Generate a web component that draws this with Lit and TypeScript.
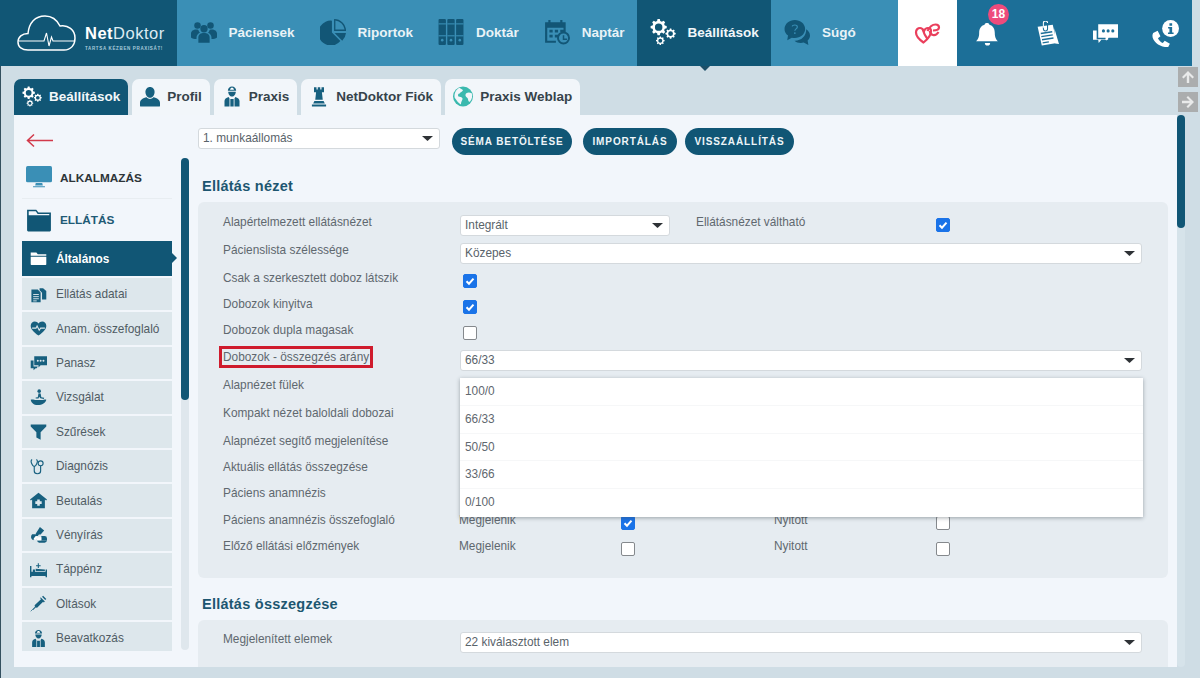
import { LitElement, html, css, svg } from "lit";
import { customElement } from "lit/decorators.js";

// gear outline with a round hole, to be filled with evenodd
function gear(cx: number, cy: number, r: number, teeth = 8) {
  const pts: string[] = [];
  const step = (Math.PI * 2) / teeth;
  for (let i = 0; i < teeth; i++) {
    const a = i * step;
    const corners: [number, number][] = [
      [a - step * 0.32, r * 0.78],
      [a - step * 0.18, r],
      [a + step * 0.18, r],
      [a + step * 0.32, r * 0.78],
    ];
    for (const [t, d] of corners) {
      pts.push(`${(cx + Math.cos(t) * d).toFixed(2)} ${(cy + Math.sin(t) * d).toFixed(2)}`);
    }
  }
  const h = r * 0.46;
  return `M${pts.join("L")}Z M${cx - h} ${cy}a${h} ${h} 0 1 0 ${h * 2} 0a${h} ${h} 0 1 0 ${-h * 2} 0Z`;
}

const gears = `${gear(8, 7.5, 7.5)} ${gear(19, 13.5, 4.8)} ${gear(9.5, 20, 4)}`;

const ICONS: Record<string, unknown> = {
  users: svg`<circle cx="12" cy="9" r="3.400"/><circle cx="6" cy="6" r="3"/><circle cx="18" cy="6" r="3"/>
    <path d="M6.800 22v-5c0-2.700 2.300-4 5.200-4s5.200 1.300 5.200 4v5z"/><path d="M0 17v-3.500c0-2.300 2.200-3.800 4.800-3.800.8 0 1.500.1 2 .4.2 1 .8 1.900 1.500 2.500-2 .8-3.200 2.400-3.200 4.400v1.500C3 18.500 1.200 18 0 17zM24 17v-3.500c0-2.300-2.200-3.800-4.800-3.800-.8 0-1.500.1-2 .4-.2 1-.8 1.900-1.500 2.500 2 .8 3.200 2.400 3.200 4.400v1.500c2.100 0 3.900-.5 5.100-1.500z"/>`,
  pie: svg`<path d="M11 1.500v11l7.800 7.800A11.500 11.500 0 1 1 11 1.500z"/><path fill-rule="evenodd" d="M13 0a11 11 0 0 1 11 11H13zm1.200 1.300v8.500h8.500a9.600 9.600 0 0 0-8.500-8.500z"/><path d="M13.500 13H24a11 11 0 0 1-3.500 7z"/>`,
  binders: svg`<g><rect x="0.500" y="0" width="6.800" height="24" rx="1"/><rect x="8.600" y="0" width="6.800" height="24" rx="1"/><rect x="16.700" y="0" width="6.800" height="24" rx="1"/></g>
    <g fill="#3a8fb6"><rect x="0.500" y="4" width="6.800" height="1"/><rect x="8.600" y="4" width="6.800" height="1"/><rect x="16.700" y="4" width="6.800" height="1"/><rect x="0.500" y="15" width="6.800" height="1"/><rect x="8.600" y="15" width="6.800" height="1"/><rect x="16.700" y="15" width="6.800" height="1"/><circle cx="3.900" cy="19.500" r="1.200"/><circle cx="12" cy="19.500" r="1.200"/><circle cx="20.100" cy="19.500" r="1.200"/></g>`,
  calendar: svg`<path fill-rule="evenodd" d="M1 3h3V1h2v2h9V1h2v2h3v9h-2V8H3v12h8v2H1zM5 10h3v2.500H5zM10 10h3v2.500h-3zM15 10h3v2H15zM5 14.500h3V17H5zM10 14.500h3V17h-3z"/>
    <path fill-rule="evenodd" d="M18 11.500a6 6 0 1 1 0 12 6 6 0 0 1 0-12zm0 1.800a4.200 4.200 0 1 0 0 8.400 4.200 4.200 0 0 0 0-8.400zM17.300 15h1.400v3h2.500v1.300h-3.900z"/>`,
  gears: svg`<path fill-rule="evenodd" d="${gears}"/>`,
  help: svg`<path d="M10 1c5 0 9.500 3.500 9.500 8.300s-4.500 8.300-9.500 8.300c-1 0-2-.1-2.800-.4L3 19.500l.7-4.200C1.500 13.800.5 11.700.5 9.300.500 4.500 5 1 10 1z"/><path d="M20.500 9.500c2 1.300 3.500 3.300 3.500 5.700 0 1.800-.8 3.400-2.200 4.600l.7 4.200-4.300-2.300c-1 .3-1.800.4-2.700.4-2.300 0-4.400-.8-5.800-2.100 5.700.3 11-3.700 10.800-10.500z"/>
    <path d="M7.500 6.800c.4-1.500 4.800-2 4.800.5 0 1.800-2.300 1.800-2.300 3.600" fill="none" stroke="#3a8fb6" stroke-width="1.100"/><circle cx="10" cy="13" r=".8" fill="#3a8fb6"/>`,
  bell: svg`<path d="M12 1.500c1 0 1.700.7 1.800 1.700 3.600.9 5.200 4 5.200 7.800 0 4.500 1.500 6.500 3 8H1c1.500-1.500 3-3.500 3-8 0-3.800 1.600-6.900 5.200-7.800.1-1 .8-1.700 1.800-1.700z" transform="translate(0 .5)"/><path d="M9.500 21h5a2.500 2.500 0 0 1-5 0z"/>`,
  clip: svg`<path d="M3.500 5.500l14.500-2 4 17.500L7.500 23.500z"/><path d="M19.500 7l4.500 15-3.500-.5z"/>
    <path d="M9 7.500V3c0-2.800 4-2.800 4 0v4.500a2 2 0 0 1-4 0" fill="none" stroke="#1c6f98" stroke-width="1"/>
    <path d="M9 7.500V3c0-2.800 4-2.800 4 0" fill="none" stroke="#fff" stroke-width="1" transform="translate(0 -1)"/>
    <g stroke="#1c6f98" stroke-width="1.300"><path d="M6.500 12l11-1.700M7 15l11-1.700M7.700 18l11-1.700M8.300 21l6-1"/></g>`,
  chat: svg`<path d="M5 3h19v13H15l-2.500 3-.5-3H5z"/><path d="M0 9h3.500v8.500h8l3-2v2.500H8l-2.500 3-.5-3H0z"/>
    <g fill="#1c6f98"><circle cx="10" cy="9.500" r="1.500"/><circle cx="14.500" cy="9.500" r="1.500"/><circle cx="19" cy="9.500" r="1.500"/></g>`,
  phone: svg`<path fill-rule="evenodd" d="M1 11.500L5 9.500l2.500 5-2.200 1.700c.9 2 2.200 3.300 4.300 4.300l1.700-2 4.600 2.700-1.500 2.800C6.500 25 -2 17.500 1 11.500z"/><circle cx="16.500" cy="7.500" r="7.500"/>
    <path fill="#1c6f98" d="M15.500 2.800h2.400v2.200h-2.400zM14.300 6.200h3.600v5h1.300v1.300h-5v-1.300h1.300V7.500h-1.200z"/>`,
  person: svg`<path d="M12 .500c3.300 0 5.500 2.600 5.500 6s-2.200 7-5.500 7-5.500-3.600-5.500-7 2.200-6 5.500-6z"/><path d="M8 13c1 1.300 2.500 2 4 2s3-.7 4-2c4.500 1 8 3 8 6.500V23a1 1 0 0 1-1 1H1a1 1 0 0 1-1-1v-3.500C0 16 3.500 14 8 13z"/>`,
  doctor: svg`<path d="M7 5c0-3 2.300-5 5-5s5 2 5 5H7z"/><path d="M7.500 6.200h9c0 3-2 5.800-4.500 5.800S7.500 9.200 7.500 6.200z"/><path d="M3 24v-6.500c0-2.500 2-4 5-5l1 2V24zm18 0v-6.500c0-2.500-2-4-5-5l-1 2V24zM10 15h4v9h-4z"/><path d="M10.800 1.500h2.400v1h1v1.500h-4.400V2.500h1z" fill="#fff"/>`,
  rook: svg`<path d="M6 1h3v2.500h1.500V1h3v2.500H15V1h3v6h-2.500l1 9h-9l1-9H6zM6.500 17.500h11l1.500 3H5zM3.500 21.500h17V24h-17z"/>`,
  globe: svg`<circle cx="12" cy="12" r="12" fill="#3ab9ae"/><path fill="#f2f6fa" d="M8 1.500c1 1.500 3 1.500 4 3-1 2-3 2-4 4-2 0-2.500 2-1.500 3.500 2 .5 4 .5 5 2.500 0 2-2 4-2 7-3-1-5-5-7.500-8C1 8 4 3 8 1.500zM16 8c2-1.500 4.500-1 6.500 0 1 3 .5 7-2 10-1.500 1-2.500-1-2.500-3 0-1.500-2.500-2-3-4 0-1 0-2.500 1-3z"/>`,
  monitor: svg`<rect x="0" y="1" width="24" height="15" rx="1.500"/><path d="M9 16.500h6l.5 2.500h-7zM6.500 19.500h11v1h-11z"/>`,
  folder: svg`<path fill-rule="evenodd" d="M1 2.500h8.500l2 2.500H23v16.500a1 1 0 0 1-1 1H2a1 1 0 0 1-1-1zM2.500 4v3.500h19V6.500H10.800L9 4z"/>`,
  folderw: svg`<path d="M1 3.500h8l2 2.500h12v2H1zM1 9.500h22v10.500a1 1 0 0 1-1 1H2a1 1 0 0 1-1-1z"/>`,
  docs: svg`<path d="M2 5h9l4 4v14H2zM17 9.500l-3.500-3.500V3h5l4.500 4v12h-6z"/><g stroke="#dde7ec" stroke-width="1.300"><path d="M4.500 12h8M4.500 15h8M4.500 18h8M4.500 21h5"/></g>`,
  heart: svg`<path d="M12 22C4 16 1 12.500 1 8c0-3.500 2.600-6 5.800-6C9 2 11 3.200 12 5c1-1.800 3-3 5.200-3C20.400 2 23 4.500 23 8c0 4.500-3 8-11 14z"/><path d="M3 11.500h5.500l1.500-3 3 6 2-3h6" fill="none" stroke="#dde7ec" stroke-width="1.500"/>`,
  panasz: svg`<path d="M6 3h18v13H15l-3 3v-3H6z"/><path d="M1 9h4v8.500h6L9.500 20H8l-3 3v-3H1z"/><g fill="#dde7ec"><circle cx="11" cy="9.500" r="1.400"/><circle cx="15" cy="9.500" r="1.400"/><circle cx="19" cy="9.500" r="1.400"/></g>`,
  exam: svg`<circle cx="13" cy="3" r="2.500"/><path d="M12 6l3 .5 1 5 4 1-.5 1.500-5-1-1.500-2-1 2.500H8v-1.500l3-.5zM1 15c3-1 5 .5 8 .5h7c3 0 6-1.500 7-.5-.5 4-6 7.500-12 7.500S2 19.500 1 15z"/>`,
  funnel: svg`<path d="M1 2h22v3L15 13v10.500l-6-3V13L1 5z"/>`,
  steth: svg`<g fill="none" stroke="currentColor" stroke-width="1.600"><path d="M3 2C1.500 3 1.500 6 2.500 8c.8 2 2 3.500 3.500 4 1.500-.5 2.700-2 3.500-4 1-2 1-5-.5-6"/><path d="M6 12v6.500c0 5 9 5 9 0V11"/><circle cx="15" cy="7.500" r="3.500"/></g>`,
  house: svg`<path fill-rule="evenodd" d="M12 1l12 9.500-1.200 1.500L21 10.600V23H3V10.600L1.200 12 0 10.500zm-1.800 9.500v2.700H7.500v3.600h2.700v2.700h3.600v-2.700h2.700v-3.600h-2.700v-2.700z"/>`,
  pills: svg`<path d="M14 1.500l6 5-5 5.500H9l-1-1zM7.500 11.800l5 .2-3.500 5H6.500l-2 3c-3.500-2-4-6-1.500-8.500z" fill-rule="evenodd"/><path d="M5 18l3-4 4 .5-4 5z" fill="#fff"/><path d="M16 14h4.500a3.500 3.500 0 0 1 3.500 3.500v3H16z"/><path d="M10 20.500h14a3.500 3.500 0 0 1-3.500 3H13a3.500 3.500 0 0 1-3-3z"/><path d="M11 16h5v4h-6c0-2 0-3 1-4z" fill="#fff"/>`,
  bed: svg`<path d="M0 7h2v8h20v-3h2v11h-2v-2H2v2H0zM4 12h3v3H4zM8 11l13 1v2H8z"/><path d="M11 3h1.500v3H15v1.500h-2.500V10H11V7.500H8.500V6H11z"/>`,
  syringe: svg`<path d="M15 3l6 6-1.500 1.500-1-1-8.500 8.500-2-.5-3.500 3.500-1-1 3.500-3.500-.5-2L15.500 6l-1-1.500zM18.500 1l4.500 4.500L21.500 7 17 2.500z"/><path d="M1 23l3-3" stroke="currentColor" stroke-width="1"/>`,
  arrow: svg`<path d="M27 7H1.500M8 1L1.500 7 8 13" fill="none" stroke="#d2394a" stroke-width="1.500"/>`,
  caret: svg`<path d="M0 0h10L5 5z"/>`,
};

function icon(name: string, cls = "") {
  return html`<svg class="ic ${cls}" viewBox="0 0 24 24" fill="currentColor">${ICONS[name]}</svg>`;
}

const NAV = [
  ["users", "Páciensek"],
  ["pie", "Riportok"],
  ["binders", "Doktár"],
  ["calendar", "Naptár"],
  ["gears", "Beállítások"],
  ["help", "Súgó"],
];

const TABS = [
  ["gears", "Beállítások"],
  ["person", "Profil"],
  ["doctor", "Praxis"],
  ["rook", "NetDoktor Fiók"],
  ["globe", "Praxis Weblap"],
];

const SIDE = [
  ["docs", "Ellátás adatai"],
  ["heart", "Anam. összefoglaló"],
  ["panasz", "Panasz"],
  ["exam", "Vizsgálat"],
  ["funnel", "Szűrések"],
  ["steth", "Diagnózis"],
  ["house", "Beutalás"],
  ["pills", "Vényírás"],
  ["bed", "Táppénz"],
  ["syringe", "Oltások"],
  ["doctor", "Beavatkozás"],
];

const OPTIONS = ["100/0", "66/33", "50/50", "33/66", "0/100"];

@customElement("app-root")
export class AppRoot extends LitElement {
  static styles = css`
    :host {
      display: block;
      width: 1200px;
      height: 678px;
      overflow: hidden;
      background: #cfdde5;
      font-family: "Liberation Sans", Arial, sans-serif;
      color: #5f686f;
      font-size: 11.85px;
    }
    .ic { display: block; flex: none; }

    .top { display: flex; height: 66px; width: 1192px; background: #3a8fb6; }
    .logo { width: 177px; background: #115675; display: flex; align-items: center; padding-left: 17px; box-sizing: border-box; color: #fff; gap: 8px; flex: none; }
    .logo svg { flex: none; }
    .brand { font-size: 16.5px; letter-spacing: 0.5px; line-height: 18px; padding-top: 9px; }
    .brand b { font-weight: 700; }
    .brand span { font-weight: 400; color: #dcebf2; }
    .brand small { display: block; font-size: 4.5px; line-height: 7px; margin-top: 3px; letter-spacing: 0.65px; font-weight: 700; color: #a9cbdb; white-space: nowrap; }
    .nav { display: flex; flex: 1; padding-left: 1px; }
    .nav a { display: flex; align-items: center; gap: 12px; padding: 0 12.5px 2px; color: #e9f3f7; font-size: 13.5px; font-weight: 700; position: relative; }
    .nav a .ic { width: 26px; height: 26px; color: #125676; }
    .nav a.on { background: #115675; color: #f0f6f9; }
    .nav a.on .ic { color: #fff; }
    .nav a.on::after { content: ""; position: absolute; left: 63px; top: 66px; border: 5px solid transparent; border-top-color: #1c4f68; border-bottom: 0; }
    .heartbox { width: 59px; background: #fff; display: flex; align-items: center; justify-content: center; flex: none; }
    .tools { width: 235px; background: #1c6f98; display: flex; align-items: center; color: #fff; flex: none; padding-left: 18px; box-sizing: border-box; }
    .tools .slot { position: relative; width: 59px; flex: none; }
    .tools .ic { width: 25px; height: 25px; }
    .tools .big .ic { width: 27px; height: 27px; }
    .badge { position: absolute; left: 13px; top: -17px; width: 21px; height: 21px; border-radius: 50%; background: #ee4b7c; font-size: 12px; font-weight: 700; line-height: 21px; text-align: center; color: #fff; }

    .body { display: flex; padding-left: 13px; height: 612px; border-left: 1px solid #33505f; }
    .left { width: 1163px; flex: none; }
    .tabs { display: flex; gap: 4px; padding-top: 13px; height: 36px; }
    .tab { display: flex; align-items: center; gap: 7px; padding: 0 8px 1px; background: #f2f6fa; color: #36434b; font-size: 13.5px; font-weight: 700; border-radius: 7px 7px 0 0; }
    .tab .ic { width: 20px; height: 21px; color: #17607f; }
    .tab.on { background: #115675; color: #f2f7fa; }
    .tab.on .ic { color: #fff; }
    .panel { display: flex; height: 552px; background: #f2f6fb; overflow: hidden; }

    .side { width: 184px; flex: none; padding-left: 8px; box-sizing: border-box; }
    .back { height: 43px; display: flex; align-items: center; padding: 7px 0 0 4px; box-sizing: border-box; }
    .back svg { width: 28px; height: 15px; }
    .sidecols { display: flex; gap: 9px; }
    .sidelist { width: 150px; flex: none; height: 493px; clip-path: inset(0 -10px 0 0); }
    .group { display: flex; align-items: center; gap: 8px; font-weight: 700; font-size: 11.8px; padding: 0 0 1px 4px; color: #2d3438; }
    .group.a { height: 41px; box-sizing: border-box; border-bottom: 1px solid #e8edf1; }
    .group.b { height: 42px; box-sizing: border-box; color: #1f5a75; }
    .group .ic { width: 26px; height: 26px; color: #3a8fb6; }
    .group.b .ic { color: #115675; }
    .item { display: flex; align-items: center; height: 32.4px; box-sizing: border-box; margin-bottom: 2px; gap: 9px; padding: 0 0 0 8px; background: #dde7ec; color: #505c64; position: relative; }
    .item .ic { width: 17px; height: 17px; color: #17607f; }
    .item.on { background: #115675; color: #fff; font-weight: 700; height: 35px; }
    .item.on .ic { color: #fff; }
    .item.on::after { content: ""; position: absolute; left: 150px; top: 12px; border: 5px solid transparent; border-left-color: #115675; border-right: 0; }
    .sidebar { width: 8px; height: 492px; background: #dfe7ed; border-radius: 4px; flex: none; }
    .sidebar div { height: 242px; background: #115675; border-radius: 4px; }

    .main { flex: 1; padding-top: 13px; }
    .bar { display: flex; align-items: flex-start; }
    .sel { position: relative; height: 21px; box-sizing: border-box; background: #fff; border: 1px solid #d4d9dd; border-radius: 3px; padding: 0 0 0 4px; line-height: 18px; color: #59636a; }
    .sel svg { position: absolute; right: 6px; top: 7px; width: 11px; height: 5px; color: #2e3236; }
    .bar .sel { width: 242px; }
    .btn { height: 27px; border-radius: 14px; background: #115675; color: #eef5f8; font-size: 10px; font-weight: 700; letter-spacing: 0.9px; line-height: 27px; text-align: center; }
    .btn.b1 { width: 120px; margin-left: 12px; }
    .btn.b2 { width: 94px; margin-left: 11px; }
    .btn.b3 { width: 109px; margin-left: 8px; }
    h2 { margin: 0 0 0 4px; font-size: 14.5px; line-height: 20px; color: #1d5670; letter-spacing: 0.25px; }
    .h1 { margin-top: 21px; margin-bottom: 6px; }
    .h2 { margin-top: 16px; margin-bottom: 6px; }
    .section { width: 970px; background: #e6ecf1; border-radius: 6px; padding: 13px 26px 13px 25px; box-sizing: border-box; }
    .section.s2 { padding-top: 12px; height: 60px; }
    .row { display: grid; grid-template-columns: 237px 1fr; }
    .r26 { height: 26px; }
    .r27 { height: 27px; }
    .r28 { height: 28px; }
    .lbl { line-height: 14px; }
    .marked { display: inline-block; outline: 3px solid #cf1b2d; outline-offset: 1px; }
    .ctl { position: relative; display: flex; }
    .ctl .wide { flex: 1; }
    .chk { width: 14px; height: 14px; box-sizing: border-box; margin-top: 3px; margin-left: 3px; border: 1px solid #85898d; border-radius: 2px; background: #fff; flex: none; }
    .chk.on { background: #1a73e8; border-color: #1a73e8; position: relative; }
    .chk.on svg { display: block; width: 12px; height: 12px; }
    .sel.short { width: 210px; }
    .cap { width: 240px; margin-left: 26px; line-height: 14px; margin-right: -3px; }
    .tri { display: flex; margin-left: -1px; line-height: 14px; }
    .tri .t1 { width: 162px; }
    .tri .t2 { width: 162px; margin-left: 139px; }
    .tri .chk { margin-left: 0; }
    .drop { position: absolute; left: 0; top: 28px; width: 683px; background: #fff; box-shadow: 0 1px 4px rgba(60, 70, 80, 0.45); z-index: 2; }
    .drop div { height: 27.8px; line-height: 27.8px; padding-left: 5px; box-sizing: border-box; color: #5f686f; border-bottom: 1px solid #f6f7f8; }
    .drop div:last-child { border-bottom: 0; }

    .rail { width: 21px; flex: none; padding-top: 1px; margin-left: 1px; }
    .arrowbtn { width: 20px; height: 20px; background: #abadae; margin-bottom: 5px; display: flex; align-items: center; justify-content: center; color: #e9eaea; }
    .arrowbtn svg { width: 14px; height: 14px; }
    .track { width: 8px; height: 552px; margin: -2px 0 0 -1px; background: #d6e3ea; border-radius: 4px; }
    .track div { height: 113px; background: #115675; border-radius: 4px; }
  `;

  check(on: boolean) {
    return on
      ? html`<div class="chk on"><svg viewBox="0 0 12 12"><path d="M2.500 6.200l2.500 2.500 4.500-5" fill="none" stroke="#fff" stroke-width="2"/></svg></div>`
      : html`<div class="chk"></div>`;
  }

  select(text: string, cls = "wide") {
    return html`<div class="sel ${cls}">${text}<svg viewBox="0 0 10 5" fill="currentColor" preserveAspectRatio="none">${ICONS.caret}</svg></div>`;
  }

  tri(a: boolean, b: boolean) {
    return html`<div class="tri">
      <span class="t1">Megjelenik</span>${this.check(a)}
      <span class="t2">Nyitott</span>${this.check(b)}
    </div>`;
  }

  render() {
    return html`
      <div class="top">
        <div class="logo">
          <svg width="60" height="36" viewBox="0 0 60 36" fill="none" stroke="#fff" stroke-width="1.500">
            <path d="M11 35c-6 0-10-3-10-8s4-8.500 10-8.500C12 8 18 1 28 1c7 0 12 4 15 10 8-1.500 15 4 15 12 0 7-4 12-11 12z"/>
            <path d="M2 26h25l2.500-8 2.500 13 2.500-9 1.500 4h22" stroke-width="1.100"/>
          </svg>
          <div class="brand"><b>Net</b><span>Doktor</span><small>TARTSA KÉZBEN PRAXISÁT!</small></div>
        </div>
        <div class="nav">
          ${NAV.map(([i, t]) => html`<a class="${t === "Beállítások" ? "on" : ""}">${icon(i)}${t}</a>`)}
        </div>
        <div class="heartbox">
          <svg width="27" height="22" viewBox="0 0 26 22" fill="none" stroke="#ea3f5c" stroke-width="2.200">
            <path d="M9 20.500C4 17 1.500 14 1.500 10.500 1.500 7.500 3.500 6 5.500 6c2 0 3 1 4 3 .8-2 2-3 4-3 1.800 0 3 1 3 3 0 4-3 8-7.500 11.500z"/>
            <path d="M8 7c1.500 5 3.500 8 5 10M13 9c2-4 5-6.500 8-6.500 2 0 3.500 1 3.500 3s-2 3-6 3M24 10c-1.500 2.500-3.500 3.500-5.500 3-2-.5-3-2-3-4"/>
          </svg>
        </div>
        <div class="tools">
          <div class="slot">${icon("bell")}<div class="badge">18</div></div>
          <div class="slot">${icon("clip")}</div>
          <div class="slot">${icon("chat")}</div>
          <div class="slot big">${icon("phone")}</div>
        </div>
      </div>
      <div class="body">
        <div class="left">
          <div class="tabs">
            ${TABS.map(([i, t], n) => html`<div class="tab ${n === 0 ? "on" : ""}">${icon(i)}${t}</div>`)}
          </div>
          <div class="panel">
            <div class="side">
              <div class="back"><svg viewBox="0 0 28 14">${ICONS.arrow}</svg></div>
              <div class="sidecols">
                <div class="sidelist">
                  <div class="group a">${icon("monitor")}ALKALMAZÁS</div>
                  <div class="group b">${icon("folder")}ELLÁTÁS</div>
                  <div class="item on">${icon("folderw")}Általános</div>
                  ${SIDE.map(([i, t]) => html`<div class="item">${icon(i)}${t}</div>`)}
                </div>
                <div class="sidebar"><div></div></div>
              </div>
            </div>
            <div class="main">
              <div class="bar">
                ${this.select("1. munkaállomás", "")}
                <div class="btn b1">SÉMA BETÖLTÉSE</div>
                <div class="btn b2">IMPORTÁLÁS</div>
                <div class="btn b3">VISSZAÁLLÍTÁS</div>
              </div>
              <h2 class="h1">Ellátás nézet</h2>
              <div class="section">
                <div class="row r28">
                  <div class="lbl">Alapértelmezett ellátásnézet</div>
                  <div class="ctl">${this.select("Integrált", "short")}<span class="cap">Ellátásnézet váltható</span>${this.check(true)}</div>
                </div>
                <div class="row r28"><div class="lbl">Pácienslista szélessége</div><div class="ctl">${this.select("Közepes")}</div></div>
                <div class="row r26"><div class="lbl">Csak a szerkesztett doboz látszik</div><div class="ctl">${this.check(true)}</div></div>
                <div class="row r26"><div class="lbl">Dobozok kinyitva</div><div class="ctl">${this.check(true)}</div></div>
                <div class="row r27"><div class="lbl">Dobozok dupla magasak</div><div class="ctl">${this.check(false)}</div></div>
                <div class="row r28">
                  <div class="lbl"><span class="marked">Dobozok - összegzés arány</span></div>
                  <div class="ctl">
                    ${this.select("66/33")}
                    <div class="drop">${OPTIONS.map((o) => html`<div>${o}</div>`)}</div>
                  </div>
                </div>
                <div class="row r28"><div class="lbl">Alapnézet fülek</div></div>
                <div class="row r28"><div class="lbl">Kompakt nézet baloldali dobozai</div></div>
                <div class="row r26"><div class="lbl">Alapnézet segítő megjelenítése</div></div>
                <div class="row r26"><div class="lbl">Aktuális ellátás összegzése</div></div>
                <div class="row r27"><div class="lbl">Páciens anamnézis</div></div>
                <div class="row r26"><div class="lbl">Páciens anamnézis összefoglaló</div><div class="ctl">${this.tri(true, false)}</div></div>
                <div class="row r26"><div class="lbl">Előző ellátási előzmények</div><div class="ctl">${this.tri(false, false)}</div></div>
              </div>
              <h2 class="h2">Ellátás összegzése</h2>
              <div class="section s2">
                <div class="row r28"><div class="lbl">Megjelenített elemek</div><div class="ctl">${this.select("22 kiválasztott elem")}</div></div>
              </div>
            </div>
          </div>
        </div>
        <div class="rail">
          <div class="arrowbtn"><svg viewBox="0 0 14 14" fill="currentColor"><path d="M7 1l6 6-1.500 1.500L8.200 5.300V13H5.800V5.300L2.500 8.500 1 7z"/></svg></div>
          <div class="arrowbtn"><svg viewBox="0 0 14 14" fill="currentColor"><path d="M13 7l-6 6-1.500-1.500 3.300-3.300H1V5.800h7.800L5.500 2.500 7 1z"/></svg></div>
          <div class="track"><div></div></div>
        </div>
      </div>
    `;
  }
}
